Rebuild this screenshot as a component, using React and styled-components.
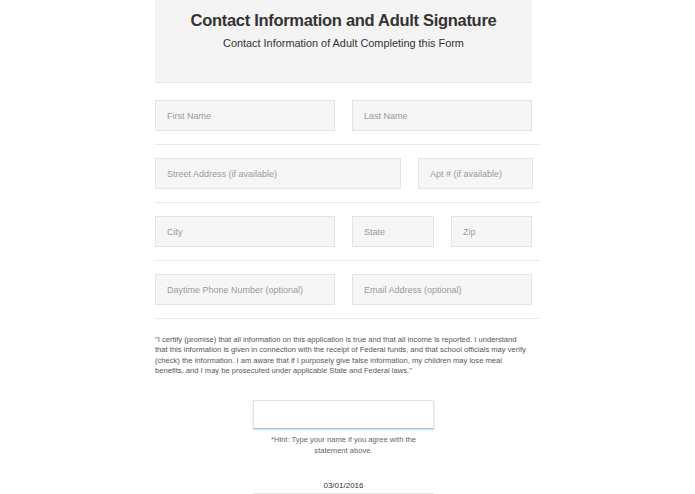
import React from 'react';
import styled, { createGlobalStyle } from 'styled-components';

const GlobalStyle = createGlobalStyle`
  html, body {
    margin: 0;
    padding: 0;
    background: #fff;
    font-family: "Liberation Sans", Arial, sans-serif;
  }
`;

const Page = styled.div`
  width: 385px;
  margin: 0 0 0 155px;
`;

const Header = styled.div`
  width: 377px;
  height: 83px;
  box-sizing: border-box;
  background: #f4f4f4;
  border-bottom: 1px solid #e6e6e6;
  text-align: center;
  padding-top: 10px;
`;

const Title = styled.h1`
  margin: 0;
  font-size: 16.5px;
  letter-spacing: -0.3px;
  font-weight: bold;
  color: #333;
  line-height: 21px;
`;

const Subtitle = styled.h2`
  margin: 4px 0 0;
  font-size: 10.9px;
  font-weight: normal;
  color: #333;
  line-height: 16px;
`;

const Row = styled.div`
  display: flex;
  gap: 17px;
  padding: 17px 8px 13px 0;
  border-bottom: 1px solid #e8e8e8;
  & + & {
    padding-top: 13px;
  }
`;

const Field = styled.input`
  flex: 0 0 ${p => p.$w || 180}px;
  min-width: 0;
  height: 31px;
  box-sizing: border-box;
  margin: 0;
  padding: 0 11px;
  background: #f6f6f6;
  border: 1px solid #e4e4e4;
  border-radius: 0;
  font-family: inherit;
  font-size: 9px;
  color: #333;
  outline: none;
  &::placeholder {
    color: #9a9a9a;
  }
`;

const Statement = styled.p`
  margin: 16px 0 0;
  padding-right: 6px;
  font-size: 7.6px;
  line-height: 10.4px;
  color: #555;
`;

const SignBlock = styled.div`
  width: 181px;
  margin: 23px 0 0 98px;
  display: flex;
  flex-direction: column;
  align-items: center;
`;

const SignInput = styled.input`
  width: 181px;
  height: 29px;
  box-sizing: border-box;
  margin: 0;
  border: 1px solid #e3e3e3;
  border-bottom: 1px solid #9cc4e8;
  box-shadow: 0 1px 2px rgba(80, 150, 220, 0.35);
  background: #fff;
  outline: none;
`;

const Hint = styled.div`
  margin-top: 5px;
  width: 170px;
  text-align: center;
  font-size: 7.6px;
  line-height: 11px;
  color: #666;
`;

const DateLine = styled.div`
  margin-top: 25px;
  width: 181px;
  text-align: center;
  font-size: 8px;
  color: #333;
  padding-bottom: 3px;
  border-bottom: 1px solid #e4e4e4;
`;

export default function App() {
  return (
    <>
      <GlobalStyle />
      <Page>
        <Header>
          <Title>Contact Information and Adult Signature</Title>
          <Subtitle>Contact Information of Adult Completing this Form</Subtitle>
        </Header>
        <Row>
          <Field $w={180} placeholder="First Name" />
          <Field $w={180} placeholder="Last Name" />
        </Row>
        <Row>
          <Field $w={246} placeholder="Street Address (if available)" />
          <Field $w={115} placeholder="Apt # (if available)" />
        </Row>
        <Row>
          <Field $w={180} placeholder="City" />
          <Field $w={82} placeholder="State" />
          <Field $w={81} placeholder="Zip" />
        </Row>
        <Row>
          <Field $w={180} placeholder="Daytime Phone Number (optional)" />
          <Field $w={180} placeholder="Email Address (optional)" />
        </Row>
        <Statement>
          "I certify (promise) that all information on this application is true and that all income is reported. I understand<br />
          that this information is given in connection with the receipt of Federal funds, and that school officials may verify<br />
          (check) the information. I am aware that if I purposely give false information, my children may lose meal<br />
          benefits, and I may be prosecuted under applicable State and Federal laws."
        </Statement>
        <SignBlock>
          <SignInput />
          <Hint>*Hint: Type your name if you agree with the statement above.</Hint>
          <DateLine>03/01/2016</DateLine>
        </SignBlock>
      </Page>
    </>
  );
}
